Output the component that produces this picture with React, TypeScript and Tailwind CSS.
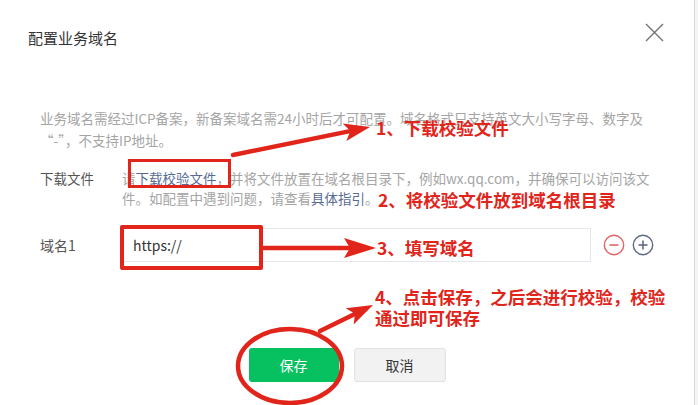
import React from "react";

const RED = "#e1251b";

type ArrowProps = { x1: number; y1: number; x2: number; y2: number; len?: number; half?: number };

// arrow line with a filled triangular head at (x2, y2)
const Arrow = ({ x1, y1, x2, y2, len = 26, half = 9 }: ArrowProps) => {
  const dx = x2 - x1;
  const dy = y2 - y1;
  const d = Math.hypot(dx, dy);
  const ux = dx / d;
  const uy = dy / d;
  const bx = x2 - ux * len;
  const by = y2 - uy * len;
  const pts = [
    [x2, y2],
    [bx - uy * half, by + ux * half],
    [bx + ux * 6, by + uy * 6],
    [bx + uy * half, by - ux * half],
  ]
    .map((p) => p.join(","))
    .join(" ");
  return (
    <g>
      <line x1={x1} y1={y1} x2={bx + ux * 8} y2={by + uy * 8} stroke={RED} strokeWidth={4.5} strokeLinecap="round" />
      <polygon points={pts} fill={RED} />
    </g>
  );
};

const CircleIcon = ({ color, plus }: { color: string; plus?: boolean }) => (
  <svg width="22" height="22" viewBox="0 0 22 22">
    <circle cx="11" cy="11" r="9.7" fill="none" stroke={color} strokeWidth="1.4" />
    <line x1="6.5" y1="11" x2="15.5" y2="11" stroke={color} strokeWidth="1.6" />
    {plus && <line x1="11" y1="6.5" x2="11" y2="15.5" stroke={color} strokeWidth="1.6" />}
  </svg>
);

export default function App() {
  return (
    <div
      className="relative w-[698px] h-[405px] overflow-hidden bg-[#f4f4f4]"
      style={{ fontFamily: '"Noto Sans CJK SC", "Noto Sans", sans-serif' }}
    >
      <div className="w-[695px] h-full bg-white border-r border-[#d8d8d8]">
        {/* header */}
        <div className="flex items-start justify-between pl-[28px] pr-[29px] pt-[27px]">
          <h2 className="text-[15px] leading-[22px] text-[#333]">配置业务域名</h2>
          <svg width="21" height="21" viewBox="0 0 21 21" className="mt-[-5px]">
            <line x1="2" y1="2" x2="19" y2="19" stroke="#777" strokeWidth="1.4" />
            <line x1="19" y1="2" x2="2" y2="19" stroke="#777" strokeWidth="1.4" />
          </svg>
        </div>

        <div className="px-[40px]">
          <p className="mt-[58px] text-[13.5px] leading-[22px] text-[#a5a5a5] whitespace-nowrap">
            业务域名需经过ICP备案，新备案域名需24小时后才可配置。域名格式只支持英文大小写字母、数字及
            <br />
            “-”，不支持IP地址。
          </p>

          <div className="mt-[17px] flex text-[13.5px] leading-[20px]">
            <div className="w-[82px] shrink-0 text-[#555]">下载文件</div>
            <div className="text-[#a5a5a5] whitespace-nowrap">
              请<span className="text-[#576b95]">下载校验文件</span>，并将文件放置在域名根目录下，例如wx.qq.com，并确保可以访问该文
              <br />
              件。如配置中遇到问题，请查看<span className="text-[#576b95]">具体指引</span>。
            </div>
          </div>

          <div className="mt-[20px] flex items-center text-[14px]">
            <div className="w-[82px] shrink-0 text-[#555]">域名1</div>
            <div className="w-[470px] h-[34px] border border-[#e3e6ea] flex items-center px-[10px] text-[#353535]">
              https://
            </div>
            <div className="ml-[12px] flex items-center gap-[7px]">
              <CircleIcon color="#e06666" />
              <CircleIcon color="#5f6a85" plus />
            </div>
          </div>

          <div className="mt-[86px] flex justify-center gap-[15px]">
            <button className="w-[90px] h-[34px] rounded-[3px] bg-[#07c160] text-white text-[14px]">保存</button>
            <button className="w-[92px] h-[34px] rounded-[3px] bg-[#f2f2f2] border border-[#e2e2e2] text-[#353535] text-[14px]">
              取消
            </button>
          </div>
        </div>
      </div>

      {/* annotations */}
      <div className="absolute left-[128px] top-[159px] w-[103px] h-[29px] border-[3px] border-[#e1251b]" />
      <div className="absolute left-[120px] top-[225px] w-[143px] h-[45px] border-[4px] border-[#e1251b] rounded-[2px]" />

      <svg className="absolute inset-0 pointer-events-none" width="698" height="405">
        <Arrow x1={233} y1={155} x2={370} y2={127} />
        <Arrow x1={263} y1={248} x2={376} y2={248} len={32} half={10} />
        <Arrow x1={320} y1={331} x2={373} y2={305} />
        <ellipse cx="290" cy="366" rx="52" ry="37" fill="none" stroke={RED} strokeWidth="4.5" />
      </svg>

      <div className="absolute left-[376px] top-[117px] text-[17.5px] leading-[22px] font-bold text-[#e1251b] whitespace-nowrap">
        1、下载校验文件
      </div>
      <div className="absolute left-[378px] top-[189px] text-[17.5px] leading-[22px] font-bold text-[#e1251b] whitespace-nowrap">
        2、将校验文件放到域名根目录
      </div>
      <div className="absolute left-[377px] top-[237px] text-[17.5px] leading-[22px] font-bold text-[#e1251b] whitespace-nowrap">
        3、填写域名
      </div>
      <div className="absolute left-[375px] top-[286px] text-[17.5px] leading-[21px] font-bold text-[#e1251b] whitespace-nowrap">
        4、点击保存，之后会进行校验，校验
        <br />
        通过即可保存
      </div>
    </div>
  );
}
